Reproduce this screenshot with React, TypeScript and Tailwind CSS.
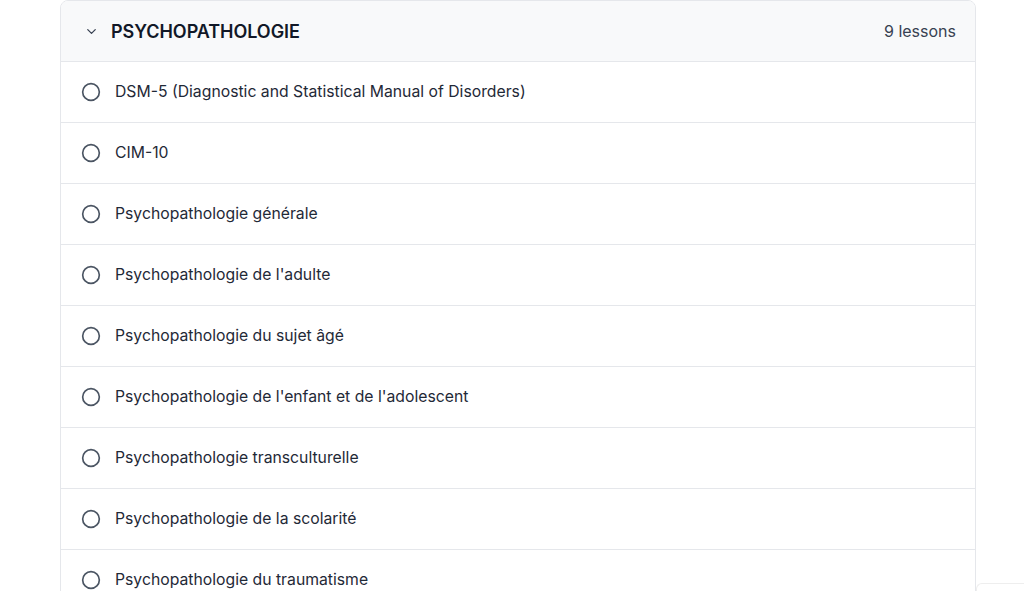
import React from "react";
import { ChevronDown, Circle } from "lucide-react";

const lessons = [
  "DSM-5 (Diagnostic and Statistical Manual of Disorders)",
  "CIM-10",
  "Psychopathologie générale",
  "Psychopathologie de l'adulte",
  "Psychopathologie du sujet âgé",
  "Psychopathologie de l'enfant et de l'adolescent",
  "Psychopathologie transculturelle",
  "Psychopathologie de la scolarité",
  "Psychopathologie du traumatisme",
];

export default function App() {
  return (
    <div
      className="w-[1024px] h-[591px] overflow-hidden bg-white relative"
      style={{ fontFamily: "Inter, 'Noto Sans', sans-serif" }}
    >
      <div className="ml-[60px] w-[916px] border border-[#e5e7eb] rounded-t-lg overflow-hidden">
        <div className="h-[61px] bg-[#f8f9fa] border-b border-[#e5e7eb] flex items-center pl-[23px] pr-[19px]">
          <ChevronDown size={15} strokeWidth={2} className="text-[#374151]" />
          <span className="ml-[12px] text-[18px] font-semibold text-[#111827] tracking-[-0.05px]">
            PSYCHOPATHOLOGIE
          </span>
          <span className="ml-auto text-[16px] text-[#374151]">9 lessons</span>
        </div>
        {lessons.map((l) => (
          <div
            key={l}
            className="h-[61px] border-b border-[#e5e7eb] flex items-center pl-[20px] bg-white"
          >
            <Circle size={20} strokeWidth={2} className="text-[#4b5563]" />
            <span className="ml-[14px] text-[15.75px] text-[#1f2937] -mt-[1px]">{l}</span>
          </div>
        ))}
      </div>
      <div className="absolute left-[976px] top-[583px] w-[60px] h-[20px] border-t border-l border-[#eeeeee] rounded-tl-md" />
    </div>
  );
}
